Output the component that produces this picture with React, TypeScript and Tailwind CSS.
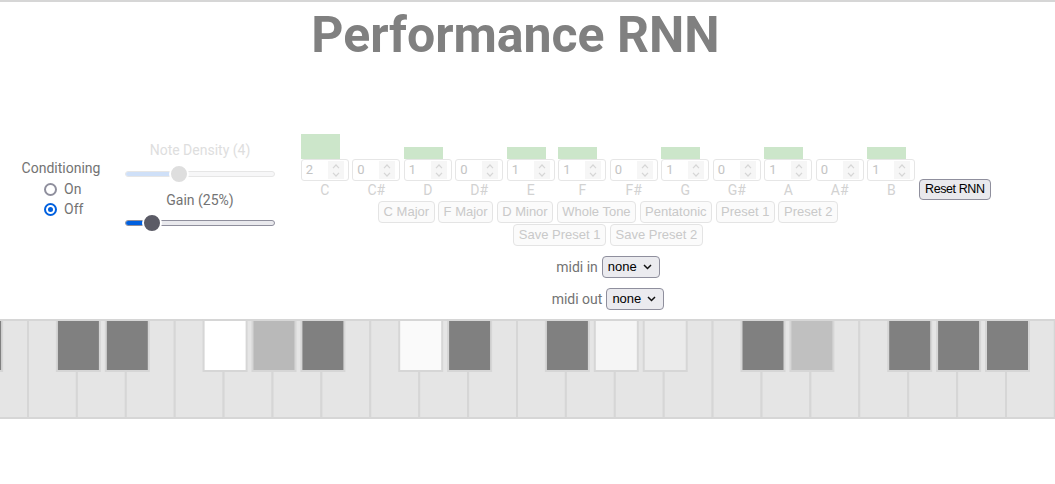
import React from "react";

const notes = [
  { name: "C", count: 2 },
  { name: "C#", count: 0 },
  { name: "D", count: 1 },
  { name: "D#", count: 0 },
  { name: "E", count: 1 },
  { name: "F", count: 1 },
  { name: "F#", count: 0 },
  { name: "G", count: 1 },
  { name: "G#", count: 0 },
  { name: "A", count: 1 },
  { name: "A#", count: 0 },
  { name: "B", count: 1 },
];

const presetsRow1 = ["C Major", "F Major", "D Minor", "Whole Tone", "Pentatonic", "Preset 1", "Preset 2"];
const presetsRow2 = ["Save Preset 1", "Save Preset 2"];

// black keys sit on white-key boundary k; value is the fill colour
const blackKeys: Record<number, string> = {
  0: "#808080",
  2: "#808080",
  3: "#808080",
  5: "#ffffff",
  6: "#b9b9b9",
  7: "#808080",
  9: "#fafafa",
  10: "#808080",
  12: "#808080",
  13: "#f5f5f5",
  14: "#ebebeb",
  16: "#808080",
  17: "#c0c0c0",
  19: "#808080",
  20: "#808080",
  21: "#808080",
};

const KEY_W = 48.9;
const KEY_X0 = -20.9;

function Radio({ checked, label }: { checked: boolean; label: string }) {
  return (
    <div className="flex items-center h-[20px] gap-[7px]">
      {checked ? (
        <span className="w-[13px] h-[13px] rounded-full border-2 border-[#0060df] flex items-center justify-center">
          <span className="w-[5px] h-[5px] rounded-full bg-[#0060df]" />
        </span>
      ) : (
        <span className="w-[13px] h-[13px] rounded-full border-2 border-[#8f8f9d]" />
      )}
      <span>{label}</span>
    </div>
  );
}

function Slider({ pct, disabled }: { pct: number; disabled?: boolean }) {
  return (
    <div className="relative w-[150px] h-[20px] flex items-center">
      <div
        className={
          disabled
            ? "w-full h-[6px] rounded-full border border-[#e6e6e6] bg-[#f7f7f8] overflow-hidden"
            : "w-full h-[6px] rounded-full border border-[#8f8f9d] bg-[#e9e9ed] overflow-hidden"
        }
      >
        <div
          className={disabled ? "h-full bg-[#cfe0f8]" : "h-full bg-[#0060df]"}
          style={{ width: `${pct}%` }}
        />
      </div>
      <div
        className={
          disabled
            ? "absolute top-0 w-[20px] h-[20px] rounded-full border-2 border-white bg-[#dedede]"
            : "absolute top-0 w-[20px] h-[20px] rounded-full border-2 border-white bg-[#5b5b66]"
        }
        style={{ left: `calc(${pct}% - 10px)` }}
      />
    </div>
  );
}

function Chevron({ up }: { up?: boolean }) {
  return (
    <svg width="8" height="5" viewBox="0 0 8 5">
      <path
        d={up ? "M1 4.2 L4 1 L7 4.2" : "M1 0.8 L4 4 L7 0.8"}
        fill="none"
        stroke="#d6d6d6"
        strokeWidth="1.2"
      />
    </svg>
  );
}

function NumberBox({ value }: { value: number }) {
  return (
    <div className="w-[48px] h-[22px] border border-[#e6e6e6] rounded-[3px] flex items-center bg-white">
      <span className="pl-[4px] flex-1 text-[13px] text-[#c4c4c4]">{value}</span>
      <div className="w-[16px] h-[18px] mr-[4px] bg-[#f6f6f6] flex flex-col items-center justify-center gap-[3px]">
        <Chevron up />
        <Chevron />
      </div>
    </div>
  );
}

function PresetButton({ label }: { label: string }) {
  return (
    <div className="h-[22px] px-[4.5px] flex items-center border border-[#e4e4e4] rounded-[4px] bg-[#fbfbfb] text-[13px] text-[#c9c9c9] font-['Liberation_Sans',Arial,sans-serif]">
      {label}
    </div>
  );
}

function MidiSelect({ label }: { label: string }) {
  return (
    <div className="flex items-center h-[22px] gap-[4px]">
      <span className="text-[14px]">{label}</span>
      <div className="h-[22px] w-[58px] border border-[#8f8f9d] rounded-[4px] bg-[#ebebef] flex items-center justify-between pl-[5px] pr-[7px] text-[13px] text-black font-['Liberation_Sans',Arial,sans-serif]">
        <span>none</span>
        <svg width="9" height="6" viewBox="0 0 9 6">
          <path d="M1 1 L4.5 4.5 L8 1" fill="none" stroke="#111" strokeWidth="1.5" />
        </svg>
      </div>
    </div>
  );
}

function Keyboard() {
  const whites = Array.from({ length: 23 }, (_, i) => i);
  return (
    <svg width="1055" height="100" className="block">
      {whites.map((i) => (
        <rect
          key={i}
          x={KEY_X0 + i * KEY_W}
          y={1}
          width={KEY_W}
          height={98}
          fill="#e5e5e5"
          stroke="#d6d6d6"
          strokeWidth={2}
        />
      ))}
      {Object.entries(blackKeys).map(([k, color]) => {
        const cx = KEY_X0 + Number(k) * KEY_W + 1.5;
        return (
          <rect
            key={k}
            x={cx - 21.5}
            y={1}
            width={43}
            height={51}
            fill={color}
            stroke="#d6d6d6"
            strokeWidth={2}
          />
        );
      })}
    </svg>
  );
}

export default function App() {
  return (
    <div className="w-[1055px] h-[484px] bg-white overflow-hidden border-t-2 border-[#d6d6d6] font-['Roboto',sans-serif] text-[#737373]">
      <h1 className="pt-[7px] pr-[24px] text-center text-[50px] leading-[52px] font-bold text-[#808080]">
        Performance RNN
      </h1>

      <div className="flex items-start mt-[69px]">
        <div className="ml-[21px] w-[80px] pt-[30px] text-[14px]">
          <div className="text-center leading-[17px]">Conditioning</div>
          <div className="flex flex-col pl-[23px] mt-[2px]">
            <Radio checked={false} label="On" />
            <Radio checked label="Off" />
          </div>
        </div>

        <div className="ml-[24px] w-[150px] pt-[12px] text-[14px] flex flex-col items-center">
          <div className="leading-[17px] text-[#dedede]">Note Density (4)</div>
          <div className="mt-[5px]">
            <Slider pct={36} disabled />
          </div>
          <div className="mt-[8px] leading-[17px]">Gain (25%)</div>
          <div className="mt-[4px]">
            <Slider pct={18} />
          </div>
        </div>

        <div className="ml-[26px] w-[614px] pt-[4px] flex flex-col items-center">
          <div className="flex gap-[3.5px]">
            {notes.map((n) => (
              <div key={n.name} className="w-[48px] flex flex-col">
                <div className="h-[25px] flex items-end">
                  <div className="w-[39px] bg-[#cce6ca]" style={{ height: n.count * 12.5 }} />
                </div>
                <NumberBox value={n.count} />
                <div className="h-[18px] leading-[18px] text-center text-[14px] text-[#d2d2d2]">
                  {n.name}
                </div>
              </div>
            ))}
          </div>
          <div className="mt-[2px] flex gap-[3.5px]">
            {presetsRow1.map((p) => (
              <PresetButton key={p} label={p} />
            ))}
          </div>
          <div className="mt-[1px] flex gap-[4px]">
            {presetsRow2.map((p) => (
              <PresetButton key={p} label={p} />
            ))}
          </div>
          <div className="mt-[10px]">
            <MidiSelect label="midi in" />
          </div>
          <div className="mt-[10px]">
            <MidiSelect label="midi out" />
          </div>
        </div>

        <div className="ml-[4px] mt-[49px] h-[21px] px-[5px] flex items-center border border-[#8f8f9d] rounded-[4px] bg-[#e9e9ed] text-[12.5px] tracking-[-0.4px] text-black font-['Liberation_Sans',Arial,sans-serif]">
          Reset RNN
        </div>
      </div>

      <div className="mt-[9px]">
        <Keyboard />
      </div>
    </div>
  );
}
